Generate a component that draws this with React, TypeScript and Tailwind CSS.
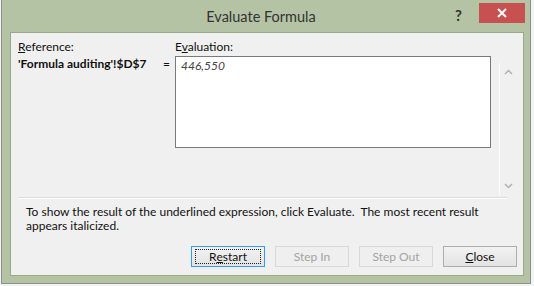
import React from "react";

const ui = { fontFamily: 'Lato, "Noto Sans", "Liberation Sans", sans-serif' };

function Btn({
  children,
  disabled,
  focused,
}: {
  children: React.ReactNode;
  disabled?: boolean;
  focused?: boolean;
}) {
  if (disabled) {
    return (
      <div className="flex h-[21px] w-[74px] items-center justify-center border border-[#d9d9d9] bg-[#efefef] text-[12px] text-[#a3a3a3]">
        {children}
      </div>
    );
  }
  return (
    <div
      className={
        "flex h-[21px] w-[74px] items-center justify-center border bg-gradient-to-b from-[#f2f2f2] to-[#e3e3e3] text-[12px] text-[#111] " +
        (focused ? "border-[#3399ff]" : "border-[#adadad]")
      }
    >
      {focused ? (
        <div className="flex h-[15px] w-[66px] items-center justify-center border border-dotted border-[#222]">
          {children}
        </div>
      ) : (
        children
      )}
    </div>
  );
}

export default function App() {
  return (
    <div className="h-[286px] w-[534px] bg-[#f3f3f3]" style={ui}>
      <div className="ml-[1px] flex h-[284px] w-[530px] flex-col border-x border-b border-[#8f8f8f] bg-[#b3c3a3] pb-[7px] pl-[8px] pr-[6px]">
        {/* title bar */}
        <div className="relative flex h-[32px] items-center justify-center">
          <span className="mr-[12px] mt-[2px] text-[14.5px] text-[#333]">Evaluate Formula</span>
          <span className="absolute left-[445px] top-[4px] text-[15px] font-bold text-[#333]">?</span>
          <div className="absolute left-[469px] top-[3px] flex h-[20px] w-[46px] items-center justify-center bg-[#c75050]">
            <svg width="10" height="10" viewBox="0 0 10 10">
              <path d="M1 1 L9 9 M9 1 L1 9" stroke="#fff" strokeWidth="2" />
            </svg>
          </div>
        </div>

        {/* panel */}
        <div className="flex flex-1 flex-col border border-[#98a98a] bg-[#f0f0f0] text-[12px] text-[#111]">
          <div className="flex pl-[7px] pt-[6px]">
            <div className="flex w-[145px] flex-col">
              <span className="leading-[16px]">
                <span className="underline">R</span>eference:
              </span>
              <span className="mt-[1px] whitespace-nowrap font-bold leading-[16px]">'Formula auditing'!$D$7</span>
            </div>
            <div className="flex w-[12px] flex-col">
              <span className="mt-[17px] leading-[16px]">=</span>
            </div>
            <div className="flex flex-col">
              <span className="leading-[16px]">
                E<span className="underline">v</span>aluation:
              </span>
              <div className="mt-[1px] h-[92px] w-[316px] border border-[#7a7a7a] bg-white px-[5px] pt-[1px] italic leading-[16px] text-[#444]">
                446,550
              </div>
            </div>
            <div className="ml-[8px] mt-[24px] flex h-[132px] w-[18px] flex-col items-center justify-between border-l border-[#fdfdfd] py-[6px]">
              <svg width="9" height="6" viewBox="0 0 9 6">
                <path d="M1 5 L4.5 1.5 L8 5" fill="none" stroke="#b0b0b0" strokeWidth="1.5" />
              </svg>
              <svg width="9" height="6" viewBox="0 0 9 6">
                <path d="M1 1 L4.5 4.5 L8 1" fill="none" stroke="#b0b0b0" strokeWidth="1.5" />
              </svg>
            </div>
          </div>
          <div className="ml-[7px] mt-[2px] h-[2px] w-[489px] border-t border-[#dcdcdc] border-b-white border-b" />
          <p className="ml-[15px] mt-[6px] w-[470px] leading-[14px]">
            To show the result of the underlined expression, click Evaluate.&nbsp; The most recent result appears italicized.
          </p>
          <div className="mt-auto mb-[8px] flex justify-end gap-[10px] pr-[6px]">
            <Btn focused>
              R<span className="underline">e</span>start
            </Btn>
            <Btn disabled>Step In</Btn>
            <Btn disabled>Step Out</Btn>
            <Btn>
              <span className="underline">C</span>lose
            </Btn>
          </div>
        </div>
      </div>
    </div>
  );
}
